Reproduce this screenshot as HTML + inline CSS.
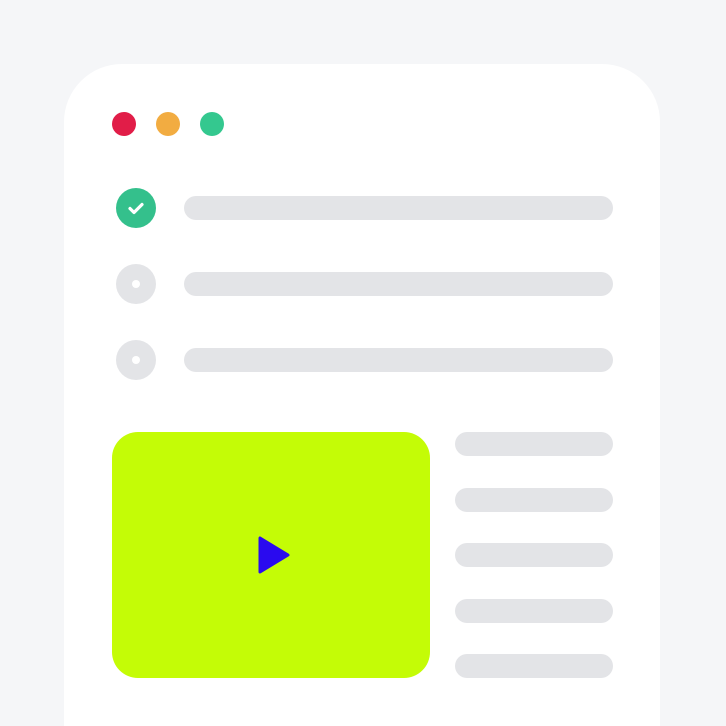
<!DOCTYPE html><html style="width:726px;height:726px;overflow:hidden"><head><style>
body{margin:0;width:726px;height:726px;background:#f5f6f8;position:relative;overflow:hidden}
div{position:absolute}
.card{left:64px;top:64px;width:596px;height:662px;background:#fff;border-radius:58px 58px 0 0}
.dot{width:24px;height:24px;border-radius:50%;top:112px}
.bar{background:#e3e4e7;height:24px;border-radius:12px}
.c{width:40px;height:40px;border-radius:50%;left:116px;background:#e3e4e7}
.c::after{content:"";position:absolute;left:16px;top:16px;width:8px;height:8px;border-radius:50%;background:#fff}
</style></head><body>
<div class="card"></div>
<div class="dot" style="left:112px;background:#e11d48"></div>
<div class="dot" style="left:156px;background:#f2ac41"></div>
<div class="dot" style="left:200px;background:#34c88f"></div>
<div style="left:116px;top:188px;width:40px;height:40px;border-radius:50%;background:#34c08c"><svg width="40" height="40"><path d="M14 20.5l4 4 8-8" stroke="#fff" stroke-width="3.2" fill="none" stroke-linecap="round" stroke-linejoin="round"/></svg></div>
<div class="bar" style="left:184px;top:196px;width:429px"></div>
<div class="c" style="top:264px"></div>
<div class="bar" style="left:184px;top:272px;width:429px"></div>
<div class="c" style="top:340px"></div>
<div class="bar" style="left:184px;top:348px;width:429px"></div>
<div style="left:112px;top:432px;width:318px;height:246px;border-radius:26px;background:#c4fc06"><svg width="318" height="246" style="position:absolute;left:0;top:0"><path d="M148 106 L148 140 L176 123 Z" fill="#2a0aef" stroke="#2a0aef" stroke-width="3" stroke-linejoin="round"/></svg></div>
<div class="bar" style="left:455px;top:432px;width:158px"></div>
<div class="bar" style="left:455px;top:488px;width:158px"></div>
<div class="bar" style="left:455px;top:543px;width:158px"></div>
<div class="bar" style="left:455px;top:599px;width:158px"></div>
<div class="bar" style="left:455px;top:654px;width:158px"></div>
</body></html>
